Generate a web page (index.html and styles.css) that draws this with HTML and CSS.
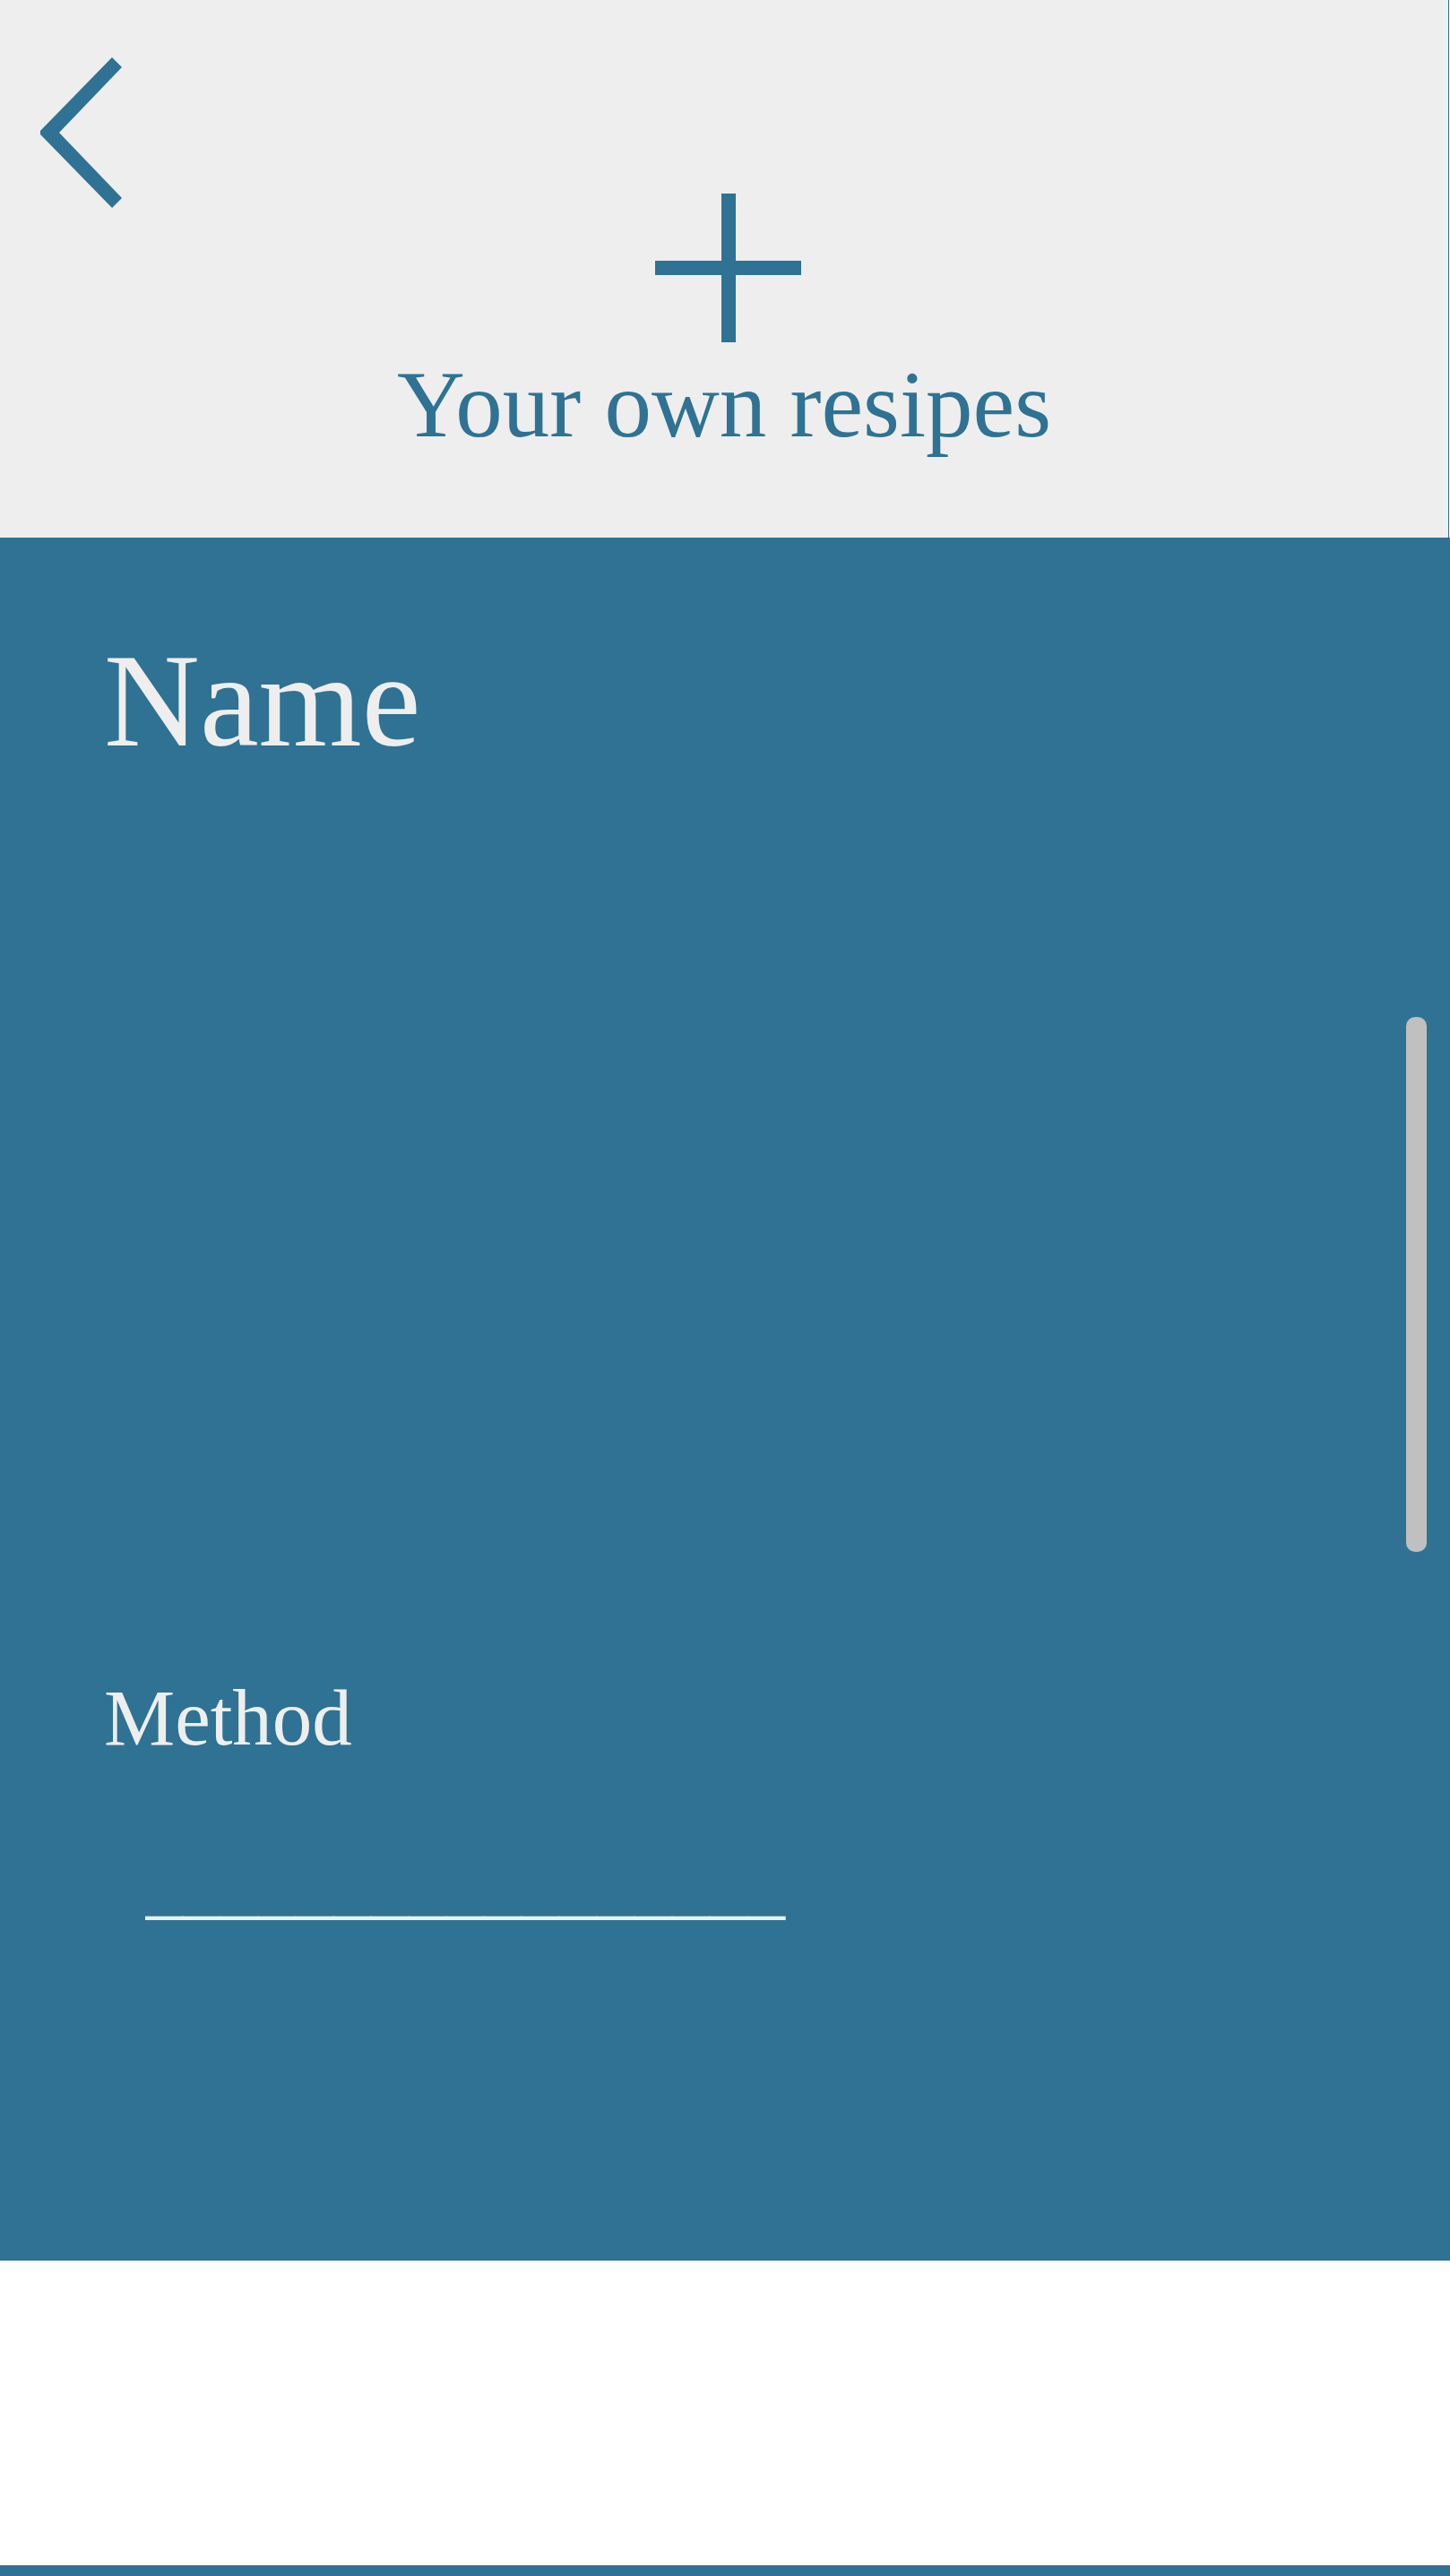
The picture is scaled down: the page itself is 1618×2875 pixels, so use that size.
FILE: index.html
```html
<!DOCTYPE html>
<html lang="en">
<head>
  <meta charset="utf-8">
  <meta name="viewport" content="width=device-width, initial-scale=1">
  <title>Your own resipes</title>
  <link rel="stylesheet" href="styles.css">
</head>
<body>
  <header class="header">
    <button class="back" type="button" aria-label="Back">
      <svg class="icon" width="92" height="168" viewBox="0 0 92 168" aria-hidden="true">
        <path d="M80 0L91 11L21 84L91 157L80 168L0 86V82Z"/>
      </svg>
    </button>
    <div class="heading">
      <button class="add" type="button" aria-label="Add recipe">
        <svg class="icon" width="172" height="166" viewBox="0 0 172 166" aria-hidden="true">
          <path d="M83 0H99V75H172V91H99V166H83V91H9V75H83Z"/>
        </svg>
      </button>
      <h1 class="title">Your own resipes</h1>
    </div>
  </header>
  <main class="recipe">
    <form class="form">
      <h2 class="name">Name</h2>
      <label class="label" for="method">Method</label>
      <input class="field" id="method" type="text" placeholder="_________________">
    </form>
    <div class="scrollbar"></div>
  </main>
  <footer class="footer"></footer>
</body>
</html>
```
FILE: styles.css
```css
:root {
  --blue: #2f7293;
  --light: #eeeeee;
}

* {
  box-sizing: border-box;
}

body {
  display: flex;
  flex-direction: column;
  min-height: 100vh;
  margin: 0;
  background: #ffffff;
  color: var(--light);
  font-family: Charter, "Bitstream Charter", "Liberation Serif", serif;
}

button {
  padding: 0;
  border: 0;
  background: none;
  cursor: pointer;
}

h1,
h2 {
  margin: 0;
  font-weight: 400;
}

.header {
  display: grid;
  grid-template-columns: 1fr auto 1fr;
  align-items: start;
  padding: 64px 0 88px;
  margin-right: 1px;
  border-right: 1px solid var(--blue);
  background: var(--light);
  color: var(--blue);
}

.icon {
  display: block;
  fill: currentColor;
}

.back {
  justify-self: start;
  margin-left: 45px;
  color: inherit;
}

.heading {
  display: flex;
  flex-direction: column;
  align-items: center;
  gap: 10px;
  padding-top: 152px;
}

.add {
  color: inherit;
}

.title {
  font-size: 105px;
  line-height: 120px;
}

.recipe {
  display: flex;
  justify-content: space-between;
  padding-right: 26px;
  background: var(--blue);
}

.form {
  display: flex;
  flex: 1;
  flex-direction: column;
  padding: 102px 0 370px 116px;
}

.name {
  margin-bottom: 1005px;
  font-size: 148px;
  line-height: 160px;
}

.label {
  font-size: 89px;
  line-height: 100px;
}

.field {
  height: 100px;
  margin-top: 86px;
  padding: 0 0 0 46px;
  border: 0;
  outline: 0;
  background: none;
  color: inherit;
  font-family: inherit;
  font-size: 84px;
}

.field::placeholder {
  color: inherit;
  opacity: 1;
}

.scrollbar {
  width: 23px;
  height: 597px;
  margin-top: 535px;
  border-radius: 10px;
  background: #c0c0c0;
}

.footer {
  flex: 1;
  min-height: 352px;
  border-bottom: 12px solid var(--blue);
}
```
